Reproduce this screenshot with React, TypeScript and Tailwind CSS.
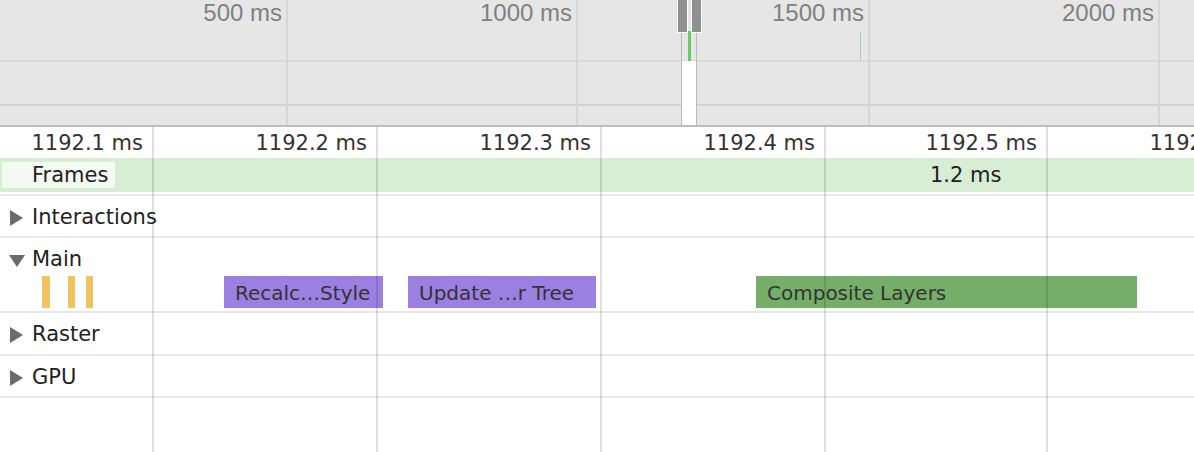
import type { ReactNode } from 'react'

const overviewTicks = [
  { x: 287, label: '500 ms' },
  { x: 577, label: '1000 ms' },
  { x: 869, label: '1500 ms' },
  { x: 1159, label: '2000 ms' },
]

const rulerTicks = [
  { x: 153, label: '1192.1 ms' },
  { x: 377, label: '1192.2 ms' },
  { x: 601, label: '1192.3 ms' },
  { x: 825, label: '1192.4 ms' },
  { x: 1047, label: '1192.5 ms' },
  { x: 1271, label: '1192.6 ms' },
]

const mainEvents = [
  { left: 224, width: 159, label: 'Recalc…Style', color: 'bg-[#9b80e2]' },
  { left: 408, width: 188, label: 'Update …r Tree', color: 'bg-[#9b80e2]' },
  { left: 756, width: 381, label: 'Composite Layers', color: 'bg-[#74ae68]' },
]

const scripts = [
  { left: 42, width: 8 },
  { left: 68, width: 7 },
  { left: 86, width: 7 },
]

function Caret({ open }: { open?: boolean }) {
  return (
    <svg width="16" height="16" viewBox="0 0 16 16" className="shrink-0">
      {open ? <path d="M0 3h16L8 15z" fill="#6b6b6b" /> : <path d="M1 0l13 8L1 16z" fill="#6b6b6b" />}
    </svg>
  )
}

function Track({ label, open, height, children }: { label: string; open?: boolean; height: string; children?: ReactNode }) {
  return (
    <div className={`relative border-b-2 border-[#e8e8e8] ${height}`}>
      <div className="flex h-[40px] items-center gap-[7px] pt-[3px] pl-[9px] text-[21px] text-[#222]">
        <Caret open={open} />
        <span>{label}</span>
      </div>
      {children}
    </div>
  )
}

function Overview() {
  return (
    <div className="relative h-[127px] overflow-hidden border-b-2 border-[#bdbdbd] bg-[#e6e6e6]">
      <div className="absolute inset-x-0 top-[60px] h-[2px] bg-[#d9d9d9]" />
      <div className="absolute inset-x-0 top-[104px] h-[2px] bg-[#d2d2d2]" />
      {overviewTicks.map((tick) => (
        <div key={tick.x}>
          <div className="absolute top-0 bottom-0 w-[2px] bg-[#d6d6d6]" style={{ left: tick.x - 1 }} />
          <div
            className="absolute top-0 text-right font-['Liberation_Sans',sans-serif] text-[24px] leading-[26px] text-[#808080]"
            style={{ right: 1194 - tick.x + 5 }}
          >
            {tick.label}
          </div>
        </div>
      ))}
      <div className="absolute top-[32px] left-[860px] h-[29px] w-px bg-[#9fd89f]" />
      <div className="absolute top-[32px] bottom-0 left-[681px] flex w-[16px] flex-col border-x border-[#bbbbbb]">
        <div className="h-[29px] shrink-0" />
        <div className="flex-1 bg-white" />
      </div>
      <div className="absolute top-[31px] left-[688px] h-[30px] w-[3px] bg-[#6bcb6b]" />
      <div className="absolute top-0 left-[677px] h-[33px] w-[11px] border border-t-0 border-white bg-[#919191]" />
      <div className="absolute top-0 left-[691px] h-[33px] w-[11px] border border-t-0 border-white bg-[#919191]" />
    </div>
  )
}

export default function App() {
  return (
    <div className="h-[452px] w-[1194px] overflow-hidden bg-white font-['DejaVu_Sans',sans-serif]">
      <Overview />
      <div className="relative h-[325px]">
        <div className="relative h-[31px] text-[21px] text-[#333]">
          {rulerTicks.map((tick) => (
            <div
              key={tick.x}
              className="absolute top-[3px] whitespace-nowrap leading-[26px]"
              style={{ right: 1194 - tick.x + 10 }}
            >
              {tick.label}
            </div>
          ))}
        </div>

        <div className="h-[38px] border-b-2 border-[#e8e8e8]">
          <div className="flex h-[34px] items-center bg-[#d8eed4] pl-[2px] text-[21px] text-[#222]">
            <div className="flex h-[26px] w-[113px] items-center bg-[#f3faf2] pt-[2px] pl-[30px]">Frames</div>
            <div className="flex-1 pt-[2px] pl-[815px]">1.2 ms</div>
          </div>
        </div>

        <Track label="Interactions" height="h-[42px]" />
        <Track label="Main" open height="h-[75px]">
          {scripts.map((s) => (
            <div key={s.left} className="absolute top-[38px] h-[32px] bg-[#f1c35f]" style={{ left: s.left, width: s.width }} />
          ))}
          {mainEvents.map((event) => (
            <div
              key={event.left}
              className={`absolute top-[38px] flex h-[32px] items-center overflow-hidden whitespace-nowrap pt-[1px] pl-[11px] text-[20px] text-[#333] ${event.color}`}
              style={{ left: event.left, width: event.width }}
            >
              {event.label}
            </div>
          ))}
        </Track>
        <Track label="Raster" height="h-[43px]" />
        <Track label="GPU" height="h-[42px]" />

        {rulerTicks.map((tick) => (
          <div key={tick.x} className="absolute top-0 bottom-0 w-[2px] bg-black/[0.12]" style={{ left: tick.x - 1 }} />
        ))}
      </div>
    </div>
  )
}
